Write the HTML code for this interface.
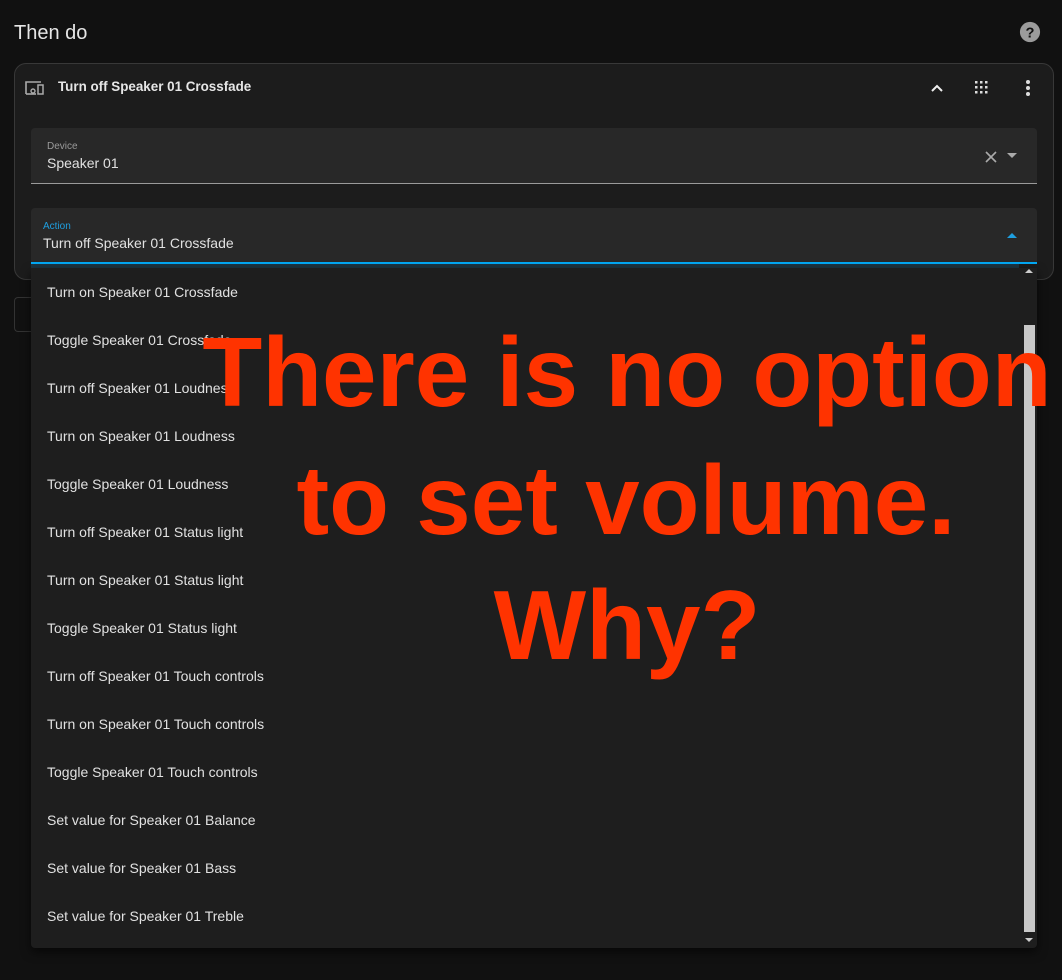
<!DOCTYPE html>
<html><head><meta charset="utf-8">
<style>
*{margin:0;padding:0;box-sizing:border-box}
html,body{width:1062px;height:980px;overflow:hidden;background:#111111;font-family:"Liberation Sans",sans-serif;color:#e1e1e1}
.abs{position:absolute}
.title{left:14px;top:22px;font-size:20px;color:#e6e6e6}
.card{left:14px;top:63px;width:1040px;height:217px;background:#1c1c1c;border:1px solid #383838;border-radius:12px}
.hdr{left:58px;top:79px;font-size:13.4px;font-weight:bold;color:#e6e6e6}
.field{left:31px;width:1006px;background:#282828;border-radius:4px 4px 0 0}
.lbl{font-size:10px;color:#9a9a9a}
.val{font-size:14px;color:#e1e1e1}
.menu{left:31px;top:268px;width:1006px;height:680px;background:#1e1e1e;box-shadow:0 4px 10px rgba(0,0,0,.6);border-radius:0 0 4px 4px}
.item{position:absolute;left:16px;font-size:14px;color:#e1e1e1}
.red{color:#ff3300;font-weight:bold;font-size:98px;white-space:nowrap;line-height:1;transform:translateX(-50%)}
</style></head><body>
<div class="abs title">Then do</div>
<svg class="abs" style="left:1019px;top:21px" width="22" height="22" viewBox="0 0 24 24"><circle cx="12" cy="12" r="11" fill="#9b9b9b"/><text x="12" y="18" text-anchor="middle" font-family="Liberation Sans" font-weight="bold" font-size="16" fill="#111">?</text></svg>
<div class="abs card"></div>
<svg class="abs" style="left:24px;top:78px" width="22" height="18" viewBox="0 0 22 18"><path d="M2 16V4h15" fill="none" stroke="#aaa" stroke-width="1.6"/><path d="M2 16h10" stroke="#aaa" stroke-width="1.6"/><circle cx="9" cy="13" r="2" fill="none" stroke="#aaa" stroke-width="1.4"/><rect x="14" y="7" width="5" height="9" fill="none" stroke="#aaa" stroke-width="1.5"/></svg>
<div class="abs hdr">Turn off Speaker 01 Crossfade</div>
<svg class="abs" style="left:929px;top:80px" width="16" height="16" viewBox="0 0 16 16"><path d="M3 11l5-5 5 5" fill="none" stroke="#eee" stroke-width="2"/></svg>
<svg class="abs" style="left:975px;top:81px" width="13" height="13" viewBox="0 0 13 13" fill="#ddd"><rect x="0" y="0" width="2.5" height="2.5"/><rect x="5" y="0" width="2.5" height="2.5"/><rect x="10" y="0" width="2.5" height="2.5"/><rect x="0" y="5" width="2.5" height="2.5"/><rect x="5" y="5" width="2.5" height="2.5"/><rect x="10" y="5" width="2.5" height="2.5"/><rect x="0" y="10" width="2.5" height="2.5"/><rect x="5" y="10" width="2.5" height="2.5"/><rect x="10" y="10" width="2.5" height="2.5"/></svg>
<svg class="abs" style="left:1024px;top:79px" width="8" height="18" viewBox="0 0 8 18" fill="#ddd"><circle cx="4" cy="3" r="2"/><circle cx="4" cy="9" r="2"/><circle cx="4" cy="15" r="2"/></svg>

<div class="abs field" style="top:128px;height:56px;border-bottom:1px solid #9a9a9a">
  <div class="abs lbl" style="left:16px;top:13px">Device</div>
  <div class="abs val" style="left:16px;top:27px">Speaker 01</div>
  <svg class="abs" style="left:953px;top:22px" width="14" height="14" viewBox="0 0 14 14"><path d="M2 2l10 10M12 2L2 12" stroke="#aaa" stroke-width="1.6"/></svg>
  <svg class="abs" style="left:976px;top:25px" width="10" height="6" viewBox="0 0 10 6"><path d="M0 0h10L5 5z" fill="#aaa"/></svg>
</div>
<div class="abs field" style="top:208px;height:56px;border-bottom:2px solid #03a9f4">
  <div class="abs lbl" style="left:12px;top:13px;color:#1e9fe0">Action</div>
  <div class="abs val" style="left:12px;top:27px">Turn off Speaker 01 Crossfade</div>
  <svg class="abs" style="left:976px;top:25px" width="10" height="6" viewBox="0 0 10 6"><path d="M0 5h10L5 0z" fill="#1e9fe0"/></svg>
</div>
<div class="abs" style="left:31px;top:264px;width:988px;height:4px;background:#1d3440"></div>
<div class="abs" style="left:14px;top:297px;width:20px;height:35px;border:1px solid #333;border-right:none;border-radius:4px 0 0 4px"></div>

<div class="abs menu">
  <div class="item" style="top:16px">Turn on Speaker 01 Crossfade</div>
  <div class="item" style="top:64px">Toggle Speaker 01 Crossfade</div>
  <div class="item" style="top:112px">Turn off Speaker 01 Loudness</div>
  <div class="item" style="top:160px">Turn on Speaker 01 Loudness</div>
  <div class="item" style="top:208px">Toggle Speaker 01 Loudness</div>
  <div class="item" style="top:256px">Turn off Speaker 01 Status light</div>
  <div class="item" style="top:304px">Turn on Speaker 01 Status light</div>
  <div class="item" style="top:352px">Toggle Speaker 01 Status light</div>
  <div class="item" style="top:400px">Turn off Speaker 01 Touch controls</div>
  <div class="item" style="top:448px">Turn on Speaker 01 Touch controls</div>
  <div class="item" style="top:496px">Toggle Speaker 01 Touch controls</div>
  <div class="item" style="top:544px">Set value for Speaker 01 Balance</div>
  <div class="item" style="top:592px">Set value for Speaker 01 Bass</div>
  <div class="item" style="top:640px">Set value for Speaker 01 Treble</div>
</div>
<svg class="abs" style="left:1025px;top:268px" width="8" height="6" viewBox="0 0 8 6"><path d="M0 5h8L4 1z" fill="#ccc"/></svg>
<div class="abs" style="left:1024px;top:325px;width:11px;height:607px;background:#c8c8c8"></div>
<svg class="abs" style="left:1025px;top:937px" width="8" height="6" viewBox="0 0 8 6"><path d="M0 1h8L4 5z" fill="#ccc"/></svg>

<div class="abs red" style="left:627px;top:323px">There is no option</div>
<div class="abs red" style="left:626px;top:451px">to set volume.</div>
<div class="abs red" style="left:627px;top:576px">Why?</div>
</body></html>
